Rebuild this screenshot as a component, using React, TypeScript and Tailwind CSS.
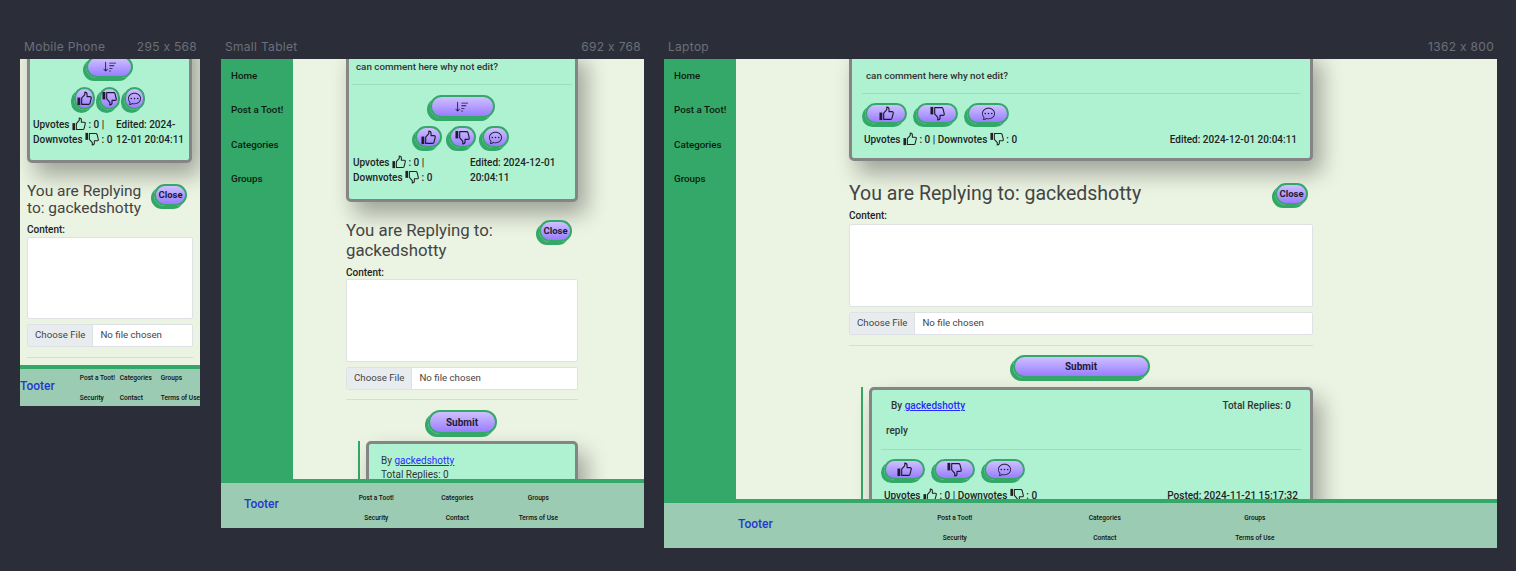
import { BsChatDots, BsSortDown } from "react-icons/bs";
import type { ReactNode } from "react";

const ROBOTO = "font-['Roboto','Liberation_Sans',sans-serif]";

// filled cuff + outlined hand, the down version is the same shape flipped
function Thumb({ size, down, className }: { size: number; down?: boolean; className?: string }) {
  return (
    <svg width={size} height={size} viewBox="0 0 16 16" className={className}>
      <g transform={down ? "matrix(1 0 0 -1 0 16)" : undefined}>
        <rect x="0.5" y="7" width="3" height="8" fill="currentColor" />
        <path
          d="M5 14.3V7.6L8.3 3.8V1.2c1.5 0 2.4 1 2.4 2.2V6h3.2c1 0 1.5.8 1.3 1.6l-1.4 5.6c-.2.8-.8 1.1-1.5 1.1Z"
          fill="none"
          stroke="currentColor"
          strokeWidth="1.2"
          strokeLinejoin="round"
        />
      </g>
    </svg>
  );
}

function InlineThumb({ down }: { down?: boolean }) {
  return <Thumb size={14} down={down} className="inline-block align-[-3px]" />;
}

// purple pill with the offset green edge used everywhere in the app
function Pill({ className, children }: { className: string; children: ReactNode }) {
  return (
    <span
      className={`inline-flex shrink-0 items-center justify-center rounded-full border-2 border-[#34a868] bg-gradient-to-b from-[#cfc0ff] to-[#9a7cff] font-bold text-[#1f1a33] shadow-[-3px_3px_0_#34a868] ${className}`}
    >
      {children}
    </span>
  );
}

function Reactions({ pill, row }: { pill: string; row: string }) {
  return (
    <div className={`flex ${row}`}>
      <Pill className={pill}><Thumb size={15} /></Pill>
      <Pill className={pill}><Thumb size={15} down /></Pill>
      <Pill className={pill}><BsChatDots size={13} /></Pill>
    </div>
  );
}

function Footer({ cols, brandClass, height }: { cols: string; brandClass: string; height: string }) {
  const links = ["Post a Toot!", "Categories", "Groups", "Security", "Contact", "Terms of Use"];
  return (
    <footer className={`flex shrink-0 items-center border-t-4 border-[#34a868] bg-[#9bcbb2] ${height} ${ROBOTO}`}>
      <span className={`text-[12px] font-medium text-[#2438d0] ${brandClass}`}>Tooter</span>
      <div className={`grid gap-y-[10px] whitespace-nowrap text-[6.6px] font-medium leading-[10px] text-[#111] ${cols}`}>
        {links.map((l) => (
          <span key={l}>{l}</span>
        ))}
      </div>
    </footer>
  );
}

function Sidebar() {
  return (
    <nav className="flex w-[72px] shrink-0 flex-col gap-[20px] bg-[#34a868] pl-[10px] pt-[10px] text-[9.8px] font-medium leading-[14.4px] text-[#0c1a10]">
      <span>Home</span>
      <span>Post a Toot!</span>
      <span>Categories</span>
      <span>Groups</span>
    </nav>
  );
}

function FileInput({ className }: { className: string }) {
  return (
    <div className={`flex h-[23px] overflow-hidden rounded-[2px] border border-[#dee2e6] bg-white text-[9.7px] text-[#444] ${className}`}>
      <span className="flex items-center border-r border-[#dee2e6] bg-[#e9ecef] px-[7px]">Choose File</span>
      <span className="flex items-center pl-[7px]">No file chosen</span>
    </div>
  );
}

function Frame({ label, dims, className, children }: { label: string; dims: string; className: string; children: ReactNode }) {
  return (
    <section className={`flex shrink-0 flex-col ${className}`}>
      <div className="flex h-[20px] shrink-0 items-start justify-between pl-[4px] pr-[3px] font-['Inter',sans-serif] text-[12px] leading-[15px] tracking-[0.3px] text-[#6b6f7a]">
        <span>{label}</span>
        <span>{dims}</span>
      </div>
      <div className={`flex min-h-0 flex-1 flex-col overflow-hidden bg-[#ebf3e2] ${ROBOTO}`}>{children}</div>
    </section>
  );
}

const CARD = "rounded-[5px] border-[3px] border-[#858585] bg-[#aef2d2] shadow-[8px_12px_22px_rgba(0,0,0,0.33)]";
const CLOSE = "h-[22px] w-[33px] text-[9.5px]";
const SMALL = "text-[10px] font-medium leading-[15px] text-[#222]";

function Mobile() {
  return (
    <Frame label="Mobile Phone" dims="295 x 568" className="h-[367px] w-[180px]">
      <main className="min-h-0 flex-1 overflow-hidden px-[7px]">
        <div className={`-mt-[30px] w-[165px] pb-[13px] pl-[3px] pr-[3px] pt-[24px] ${CARD}`}>
          <div className="flex justify-center pb-[9px]">
            <Pill className="h-[22px] w-[47px]"><BsSortDown size={14} /></Pill>
          </div>
          <Reactions pill="h-[23px] w-[21px]" row="justify-center gap-[4px]" />
          <div className={`mt-[7px] grid grid-cols-[83px_1fr] ${SMALL}`}>
            <span>Upvotes <InlineThumb /> : 0 |<br />Downvotes <InlineThumb down /> : 0</span>
            <span>Edited: 2024-12-01 20:04:11</span>
          </div>
        </div>
        <div className="mt-[20px] flex items-start justify-between">
          <h2 className="w-[118px] text-[15.5px] leading-[17px] text-[#444]">You are Replying to: gackedshotty</h2>
          <Pill className={`mr-[6px] mt-[1px] ${CLOSE}`}>Close</Pill>
        </div>
        <p className="mt-[7px] text-[10px] font-medium leading-[12px] text-[#222]">Content:</p>
        <div className="mt-[1px] h-[82px] w-[166px] rounded-[2px] border border-[#dee2e6] bg-white" />
        <FileInput className="mt-[5px] w-[166px]" />
        <hr className="mt-[10px] w-[166px] border-t border-[#d6dfcd]" />
      </main>
      <Footer height="h-[41px]" cols="ml-[25px] grid-cols-[40px_41px_40px]" brandClass="mb-[4px]" />
    </Frame>
  );
}

function Tablet() {
  return (
    <Frame label="Small Tablet" dims="692 x 768" className="ml-[21px] h-[489px] w-[423px]">
      <div className="flex min-h-0 flex-1">
        <Sidebar />
        <main className="min-w-0 flex-1 overflow-hidden pl-[53px] pr-[66px]">
          <div className={`-mt-[10px] pb-[14px] pl-[3px] pr-[3px] pt-[8px] ${CARD}`}>
            <p className="pl-[4px] text-[9.8px] font-medium leading-[13px] text-[#333]">can comment here why not edit?</p>
            <hr className="mt-[11px] border-t border-[#9fdcbf]" />
            <div className="flex justify-center pb-[8px] pt-[10px]">
              <Pill className="h-[23px] w-[65px]"><BsSortDown size={14} /></Pill>
            </div>
            <Reactions pill="h-[22px] w-[27px]" row="justify-center gap-[6.5px]" />
            <div className={`mt-[7px] grid grid-cols-[117px_1fr] pl-[1px] ${SMALL}`}>
              <span>Upvotes <InlineThumb /> : 0 |<br />Downvotes <InlineThumb down /> : 0</span>
              <span>Edited: 2024-12-01<br />20:04:11</span>
            </div>
          </div>
          <div className="mt-[18px] flex items-start justify-between">
            <h2 className="w-[190px] text-[16.8px] leading-[20px] text-[#444]">You are Replying to: gackedshotty</h2>
            <Pill className={`mr-[6px] ${CLOSE}`}>Close</Pill>
          </div>
          <p className="mt-[7px] text-[10px] font-medium leading-[12px] text-[#222]">Content:</p>
          <div className="h-[83px] rounded-[2px] border border-[#dee2e6] bg-white" />
          <FileInput className="mt-[5px]" />
          <hr className="mt-[9px] border-t border-[#d6dfcd]" />
          <div className="mt-[10px] flex justify-center">
            <Pill className="h-[24px] w-[69px] text-[10px]">Submit</Pill>
          </div>
          <div className="ml-[12px] mt-[7px] border-l-2 border-[#34a868] pl-[6px]">
            <div className={`pb-[8px] pl-[12px] pt-[10px] text-[10px] leading-[14px] text-[#333] ${CARD}`}>
              By <a className="text-[#2a2aff] underline">gackedshotty</a>
              <br />
              Total Replies: 0
            </div>
          </div>
        </main>
      </div>
      <Footer height="h-[49px]" cols="ml-[57px] grid-cols-[81px_81px_81px] pt-[4px] text-center" brandClass="mb-[4px] ml-[23px]" />
    </Frame>
  );
}

function Laptop() {
  return (
    <Frame label="Laptop" dims="1362 x 800" className="ml-[20px] h-[509px] w-[833px]">
      <div className="flex min-h-0 flex-1">
        <Sidebar />
        <main className="min-w-0 flex-1 overflow-hidden pl-[113px] pr-[184px]">
          <div className={`-mt-[10px] pb-[11px] pl-[10px] pr-[10px] pt-[17px] ${CARD}`}>
            <p className="pl-[4px] text-[9.8px] font-medium leading-[13px] text-[#333]">can comment here why not edit?</p>
            <hr className="mt-[11px] border-t border-[#9fdcbf]" />
            <Reactions pill="h-[21px] w-[42px]" row="ml-[3px] mt-[9px] gap-[9px]" />
            <div className={`mt-[8px] flex justify-between pl-[2px] pr-[3px] ${SMALL}`}>
              <span>Upvotes <InlineThumb /> : 0 | Downvotes <InlineThumb down /> : 0</span>
              <span>Edited: 2024-12-01 20:04:11</span>
            </div>
          </div>
          <div className="mt-[20px] flex items-center justify-between">
            <h2 className="text-[19.5px] leading-[26px] text-[#444]">You are Replying to: gackedshotty</h2>
            <Pill className={`mr-[5px] ${CLOSE}`}>Close</Pill>
          </div>
          <p className="mt-[3px] text-[10px] font-medium leading-[12px] text-[#222]">Content:</p>
          <div className="mt-[2px] h-[83px] rounded-[2px] border border-[#dee2e6] bg-white" />
          <FileInput className="mt-[5px]" />
          <hr className="mt-[10px] border-t border-[#d6dfcd]" />
          <div className="mt-[9px] flex justify-center">
            <Pill className="h-[23px] w-[137px] text-[10px]">Submit</Pill>
          </div>
          <div className="ml-[12px] mt-[9px] border-l-2 border-[#34a868] pl-[6px]">
            <div className={`pb-[8px] pl-[9px] pr-[9px] pt-[9px] text-[10px] leading-[14px] text-[#333] ${CARD}`}>
              <div className="flex justify-between pl-[10px] pr-[10px] font-medium">
                <span>By <a className="text-[#2a2aff] underline">gackedshotty</a></span>
                <span>Total Replies: 0</span>
              </div>
              <p className="mt-[11px] pl-[5px] font-medium">reply</p>
              <hr className="mt-[11px] border-t border-[#9fdcbf]" />
              <Reactions pill="h-[21px] w-[41px]" row="ml-[3px] mt-[9px] gap-[9px]" />
              <div className={`mt-[8px] flex justify-between pl-[3px] pr-[3px] ${SMALL}`}>
                <span>Upvotes <InlineThumb /> : 0 | Downvotes <InlineThumb down /> : 0</span>
                <span>Posted: 2024-11-21 15:17:32</span>
              </div>
            </div>
          </div>
        </main>
      </div>
      <Footer height="h-[49px]" cols="ml-[107px] grid-cols-[150px_150px_150px] pt-[4px] text-center" brandClass="mb-[4px] ml-[74px]" />
    </Frame>
  );
}

export default function App() {
  return (
    <div className="flex h-[571px] w-[1516px] items-start overflow-hidden bg-[#2b2e38] pl-[20px] pt-[39px]">
      <Mobile />
      <Tablet />
      <Laptop />
    </div>
  );
}
